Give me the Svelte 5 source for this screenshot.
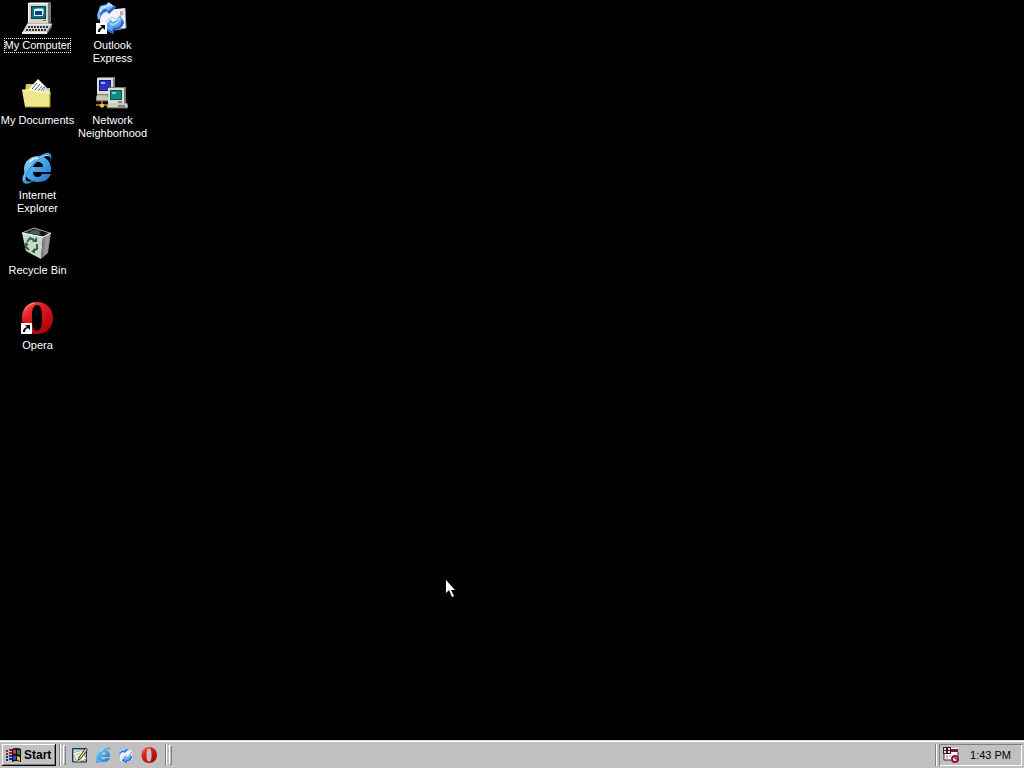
<script>
  const columns = [
    [
      { id: 'computer', label: 'My Computer' },
      { id: 'documents', label: 'My Documents' },
      { id: 'ie', label: 'Internet Explorer' },
      { id: 'recycle', label: 'Recycle Bin' },
      { id: 'opera', label: 'Opera', shortcut: true }
    ],
    [
      { id: 'outlook', label: 'Outlook Express', shortcut: true },
      { id: 'network', label: 'Network Neighborhood' }
    ]
  ];
  const quickLaunch = [
    { id: 'desktop', label: 'Show Desktop' },
    { id: 'ie', label: 'Internet Explorer' },
    { id: 'outlook', label: 'Outlook Express' },
    { id: 'opera', label: 'Opera' }
  ];
  let selected = $state('computer');
</script>

{#snippet icon(id, size, shortcut = false)}
  <svg width={size} height={size} viewBox="0 0 32 32" aria-hidden="true">
    {#if id === 'computer'}
      <path d="M7 1l2-1h20l1 1v19l-3 2H7z" fill="#777" />
      <path d="M7 1h20v20H7z" fill="#d6d4c8" />
      <path d="M7 1h20v1H8v18H7z" fill="#fff" />
      <path d="M10 4h15v13H10z" fill="#183c48" />
      <path d="M11 5h13v11H11z" fill="#08707c" />
      <path d="M13 7h9v7h-9z" fill="#d8f4f8" />
      <path d="M14 9h7v4h-7z" fill="#103c90" />
      <path d="M15 6h7v1h-7zM22 7h1v5h-1z" fill="#58b8d0" />
      <path d="M22 18h3v1h-3z" fill="#30a040" />
      <path d="M6 22h25l-5 9H1z" fill="#d8d6cc" />
      <path d="M31 22v3l-5 7v-2z" fill="#777" />
      <path d="M1 30h25v2H1z" fill="#eee" />
      <path d="M7 25h20M5 28h20" stroke="#333" stroke-dasharray="2 1" stroke-width="2" />
      <path d="M6 22h25" stroke="#fff" />
    {:else if id === 'documents'}
      <path d="M4 14l1-7h7l3 4h14v19H4z" fill="#d8c860" />
      <path d="M7 13L17 2l12 12-7 11z" fill="#fff" />
      <path d="M11 12l5-6M14 13l5-6M17 14l4-5M20 14l3-4" stroke="#555" />
      <path d="M24 9l6 7-2 4-6-6z" fill="#ddd" stroke="#666" stroke-width=".5" />
      <path d="M1 13h12l2 2h14l-1 15H4z" fill="#f0e68c" />
      <path d="M1 13h12l2 2h14" fill="none" stroke="#fffac8" />
      <path d="M4 30h25V16" fill="none" stroke="#a49028" />
    {:else if id === 'ie'}
      <defs>
        <linearGradient id="ie-fill-{size}" x2="1" y2="1">
          <stop stop-color="#a4ddff" />
          <stop offset=".45" stop-color="#48a8f0" />
          <stop offset="1" stop-color="#1c70c4" />
        </linearGradient>
      </defs>
      <path d="M17 4C9 4 3 10 3 17c0 8 6 13 14 13 7 0 11-3 13-8h-9c-1 2-2 3-4 3-3 0-5-2-5-5h18C31 10 25 4 17 4zm-5 11c0-3 2-5 5-5s5 2 5 5z" fill="url(#ie-fill-{size})" fill-rule="evenodd" />
      <path d="M29 10c2-4 2-8-1-9-4-1-11 3-18 11C3 20-1 28 3 31c2 2 7 0 11-3-5 2-8 2-9 0-1-4 3-10 9-16 6-6 11-9 14-8 2 1 2 3 1 6z" fill="#3a96de" />
      <path d="M28 4C23 2 15 7 9 14c-5 6-7 11-6 14" fill="none" stroke="#a8dcff" />
      <path d="M9 10c2-3 5-4 8-4" fill="none" stroke="#d7f2ff" stroke-width="1.4" />
    {:else if id === 'recycle'}
      <path d="M1 6L13 1l16 5-6 5z" fill="#292929" stroke="#aaa" />
      <path d="M7 6l6-3 7 1-2 4z" fill="#585858" />
      <path d="M18 4l7 1-3 5z" fill="#111" />
      <path d="M1 6l21 4-2 22-15-8z" fill="#ced4cb" />
      <path d="M22 10l8-4-3 20-7 6z" fill="#858585" />
      <path d="M25 9l4-2-3 19-3 2z" fill="#9c9c9c" />
      <path d="M1 6l21 4 8-4" fill="none" stroke="#fff" />
      <path d="M6 15l3-4 4 2M16 17l0 5-4 2M8 23l-3-3v-3" fill="none" stroke="#217034" stroke-width="2" />
      <path d="M11 15h5v-5zM14 21l-4 4 4 1zM3 19l2-4 3 3z" fill="#176d28" />
    {:else if id === 'opera'}
      <defs>
        <linearGradient id="opera-fill-{size}" x2=".8" y2="1">
          <stop stop-color="#ff776c" />
          <stop offset=".35" stop-color="#df2121" />
          <stop offset="1" stop-color="#a80008" />
        </linearGradient>
      </defs>
      <path d="M16 0C7 0 1 6 1 16s6 16 15 16 16-6 16-16S25 0 16 0zm0 3c4 0 5 5 5 13s-1 13-5 13-5-5-5-13 1-13 5-13z" fill="url(#opera-fill-{size})" fill-rule="evenodd" />
      <path d="M4 8c2-5 6-6 10-7" fill="none" stroke="#ff9489" />
    {:else if id === 'outlook'}
      <path d="M3 9l26-3 1 20-25 3z" fill="#f2f3fa" />
      <path d="M29 6l1 20-11 2" fill="none" stroke="#8ca0c8" />
      <path d="M9 20l7-5 3 2 9-5M20 19l8 5" fill="none" stroke="#bcc6de" />
      <path d="M24 9h3v4h-3z" fill="#dc9c90" />
      <path d="M1 13L4 4l7-2 1-2 8 5-7 7-2-2c-4 1-6 3-6 6l-3 2z" fill="#78b4f4" />
      <path d="M8 10l3-1 2 3 7-7-2-1-6 5-2-2c-4 0-6 4-6 7z" fill="#2866bc" />
      <path d="M4 10l2-4 6-2 1-2 3 2" fill="none" stroke="#c4e4ff" stroke-width="2" />
      <path d="M8 25l7-8 1 3c4-1 7-3 8-7l4 7c-1 5-5 8-10 8l-1 4-9-5z" fill="#5ca2f0" />
      <path d="M28 20c-1 5-5 8-10 8l-1 4-9-5v-2l8 4 1-3c5 0 9-3 9-9z" fill="#2868bc" />
      <path d="M14 21l2 2c4-1 7-3 8-7" fill="none" stroke="#a4d0fc" stroke-width="2" />
    {:else if id === 'network'}
      <path d="M1 1l2-1h16v17l-2 2H1z" fill="#808080" />
      <path d="M1 1h16v16H1z" fill="#dedbcc" />
      <path d="M3 3h12v11H3z" fill="#111a88" />
      <path d="M4 4h10v9H4z" fill="#2833c4" />
      <path d="M5 5h4v2H5z" fill="#a2adf5" />
      <path d="M0 19h18v5H0z" fill="#c8c6b9" stroke="#555" />
      <path d="M12 11l2-1h16v17l-2 2H12z" fill="#777" />
      <path d="M12 11h16v16H12z" fill="#dedbcc" />
      <path d="M14 13h12v10H14z" fill="#07565d" />
      <path d="M15 14h10v8H15z" fill="#108c85" />
      <path d="M16 15h4v2h-4z" fill="#83d1c1" />
      <path d="M11 27h21v4H11z" fill="#d5d2c5" stroke="#555" />
      <path d="M12 27h19M1 19h10" stroke="#fff" />
      <path d="M22 29h7M22 25h4" stroke="#333" />
      <path d="M0 28h11M6 24v7" stroke="#a06a10" stroke-width="2" />
      <path d="M4 27h4v3H4z" fill="#f1bd31" />
    {:else}
      <path d="M1 3h28v27H1z" fill="#7ba0b8" stroke="#203244" stroke-width="2" />
      <path d="M4 6h23v22H4z" fill="#b4e0e4" />
      <path d="M2 12l17-5 10 17-18 6z" fill="#fffde8" stroke="#75796c" />
      <path d="M8 16l8-3M11 20l6-2" stroke="#9faa9b" stroke-width="2" />
      <path d="M13 23L27 2l4 3-14 19-5 3z" fill="#dbbb35" stroke="#27382b" stroke-width="2" />
      <path d="M17 20L28 5" stroke="#fff299" stroke-width="2" />
    {/if}
    {#if shortcut}
      <path d="M0 21h11v11H0z" fill="#fff" />
      <path d="M4 23h5v5L7 26c-2 1-3 2-3 4H2c0-3 1-4 4-5z" fill="#000" />
    {/if}
  </svg>
{/snippet}

<div class="screen">
  <main>
    {#each columns as column}
      <div class="column">
        {#each column as item}
          <button class="shortcut" class:selected={selected === item.id} onclick={() => (selected = item.id)}>
            {@render icon(item.id, 32, item.shortcut)}
            <span>{item.label}</span>
          </button>
        {/each}
      </div>
    {/each}
    <svg class="pointer" width="12" height="20" viewBox="0 0 12 20" aria-hidden="true">
      <path d="M0 1v13l3-3 3 7 2-1-3-6h4z" fill="#fff" />
    </svg>
  </main>

  <footer>
    <button class="start">
      <svg width="18" height="16" viewBox="0 0 18 16" aria-hidden="true">
        <path d="M7 2q4-2 9 0v13q-5-2-9 0z" fill="#111" />
        <path d="M8 3q2-1 3 0v4q-2-1-3 0z" fill="#c83b45" />
        <path d="M12 3h3v5l-3-1z" fill="#387c4e" />
        <path d="M8 9q2-1 3 0v4q-2-1-3 0z" fill="#3147bf" />
        <path d="M12 9l3 1v4l-3-1z" fill="#d8c23e" />
        <path d="M1 4h2M4 3h3M1 7h2M4 6h3" stroke="#902040" stroke-width="2" />
        <path d="M1 10h2M4 9h3M1 13h2M4 12h3" stroke="#252b82" stroke-width="2" />
      </svg>
      Start
    </button>
    <i class="divider"></i><i class="grip"></i>
    <nav>
      {#each quickLaunch as item}
        <button aria-label={item.label}>{@render icon(item.id, 16)}</button>
      {/each}
    </nav>
    <i class="divider"></i><i class="grip"></i>
    <div class="spacer"></div>
    <i class="divider"></i>
    <div class="tray">
      <svg width="16" height="16" viewBox="0 0 16 16" aria-hidden="true">
        <path d="M1 1h14v12H1z" fill="#fff" />
        <path d="M0 0h8v7H0z" fill="#351d38" />
        <path d="M1 1h2v2H1zM5 1h2v2H5zM1 4h2v2H1zM5 4h2v2H5z" fill="#f3dce4" />
        <path d="M8 2h7v3H8z" fill="#7b1837" />
        <path d="M1 7v6h8M15 5v4" fill="none" stroke="#5e1830" />
        <path d="M3 9h2M6 9h2M3 11h2" stroke="#a17b8a" />
        <circle cx="12" cy="12" r="3" fill="#fff" stroke="#96112e" stroke-width="2" />
        <path d="M12 10v2h2" fill="none" stroke="#481121" />
      </svg>
      <time datetime="13:43">1:43 PM</time>
    </div>
  </footer>
</div>

<style>
  :global(body) {
    margin: 0;
    background: #000;
  }
  .screen {
    min-height: 100vh;
    display: flex;
    flex-direction: column;
    font: 11px/13px "Liberation Sans", Arial, sans-serif;
    cursor: default;
  }
  button {
    border: 0;
    padding: 0;
    background: none;
    color: inherit;
    font: inherit;
  }
  svg {
    display: block;
    flex: none;
  }
  main {
    flex: 1;
    position: relative;
    display: flex;
    align-items: flex-start;
    color: #fff;
  }
  .column {
    display: grid;
    grid-template-columns: 75px;
    grid-auto-rows: 75px;
  }
  .shortcut {
    display: flex;
    flex-direction: column;
    align-items: center;
    gap: 4px;
    padding-top: 2px;
  }
  .shortcut svg {
    margin-right: 2px;
  }
  .shortcut span {
    max-width: 75px;
    padding: 1px 0;
  }
  .shortcut:focus {
    outline: none;
  }
  .selected span {
    outline: 1px dotted #fff;
    outline-offset: -1px;
  }
  .pointer {
    position: absolute;
    left: 446px;
    top: 579px;
  }
  footer {
    display: flex;
    align-items: center;
    gap: 3px;
    box-sizing: border-box;
    height: 28px;
    padding: 3px 2px 1px;
    background: #c0c0c0;
    color: #000;
    box-shadow: inset 0 1px #dfdfdf, inset 0 2px #fff;
  }
  .start {
    display: flex;
    align-items: center;
    gap: 1px;
    height: 22px;
    padding: 0 5px 0 3px;
    font-size: 12px;
    font-weight: bold;
    box-shadow: inset -1px -1px #000, inset 1px 1px #fff, inset -2px -2px #808080;
  }
  .divider {
    width: 1px;
    height: 22px;
    background: #808080;
    border-right: 1px solid #fff;
  }
  .grip {
    width: 1px;
    height: 18px;
    border: 1px solid;
    border-color: #fff #808080 #808080 #fff;
    background: #c0c0c0;
    margin-left: -1px;
  }
  nav {
    display: flex;
    gap: 7px;
    padding: 0 5px 0 3px;
  }
  .spacer {
    flex: 1;
  }
  .tray {
    display: flex;
    align-items: center;
    gap: 11px;
    box-sizing: border-box;
    height: 22px;
    padding: 0 11px 0 4px;
    margin-left: -1px;
    box-shadow: inset 1px 1px #808080, inset -1px -1px #fff;
  }
</style>
